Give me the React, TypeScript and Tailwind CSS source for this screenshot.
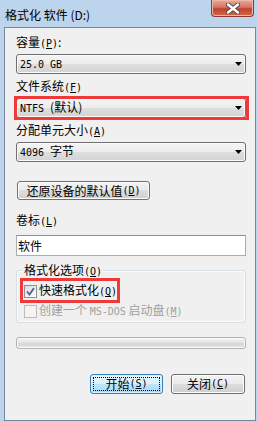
import type { ReactNode } from "react";

const cjk = "font-['Noto_Sans_CJK_SC','Noto_Sans',sans-serif]";
const mono = "font-['DejaVu_Sans_Mono','Liberation_Mono','Noto_Sans_CJK_SC',monospace] text-[10px]";

function Key({ k }: { k: string }) {
  return (
    <span className={mono}>
      (<span className="underline underline-offset-1">{k}</span>)
    </span>
  );
}

function M({ children }: { children: ReactNode }) {
  return <span className={mono}>{children}</span>;
}

function Label({ children, className = "" }: { children: ReactNode; className?: string }) {
  return <div className={`h-[14px] whitespace-nowrap leading-[14px] ${className}`}>{children}</div>;
}

function Arrow() {
  return (
    <svg width="7" height="4" viewBox="0 0 7 4" className="ml-auto mr-[3px]">
      <polygon points="0,0 7,0 3.5,4" fill="#000" />
    </svg>
  );
}

function Combo({ children, marked = false }: { children: ReactNode; marked?: boolean }) {
  return (
    <div className="relative flex h-[20px] items-center rounded-[3px] border border-[#707070] bg-[linear-gradient(to_bottom,#f4f4f4,#ececec_50%,#dfdfdf_50%,#d3d3d3)] pl-[3px] leading-[14px] shadow-[inset_0_0_0_1px_#fafafa]">
      <span className="whitespace-nowrap">{children}</span>
      <Arrow />
      {marked && (
        <div className="pointer-events-none absolute -bottom-[3px] -left-[3px] -right-[4px] -top-[3px] border-[3px] border-[#f03a3a]" />
      )}
    </div>
  );
}

function Button({ children, className = "", primary = false }: { children: ReactNode; className?: string; primary?: boolean }) {
  if (primary) {
    return (
      <div className={`flex items-center justify-center rounded-[3px] border border-[#3c7fb1] bg-[linear-gradient(to_bottom,#eaf6fd,#d9f0fc_50%,#bee6fd_50%,#a7d9f5)] p-[2px] shadow-[inset_0_0_0_1px_#d8f0fc] ${className}`}>
        <div className="flex h-full w-full items-center justify-center border border-dotted border-[#000] leading-[14px]">
          {children}
        </div>
      </div>
    );
  }
  return (
    <div className={`flex items-center justify-center rounded-[3px] border border-[#707070] bg-[linear-gradient(to_bottom,#f2f2f2,#ebebeb_50%,#dddddd_50%,#cfcfcf)] leading-[14px] shadow-[inset_0_0_0_1px_#fcfcfc] ${className}`}>
      {children}
    </div>
  );
}

function Check({ checked, disabled }: { checked?: boolean; disabled?: boolean }) {
  return (
    <div
      className={`flex h-[13px] w-[13px] shrink-0 items-center justify-center border ${
        disabled ? "border-[#bcbcbc] bg-[#f4f4f4]" : "border-[#8e8f8f] bg-[linear-gradient(135deg,#dcdcdc,#ffffff)]"
      }`}
    >
      {checked && (
        <svg width="9" height="9" viewBox="0 0 9 9">
          <path d="M1 4.5 L3.5 7.5 L8 1" fill="none" stroke="#4a5f97" strokeWidth="1.8" />
        </svg>
      )}
    </div>
  );
}

export default function App() {
  return (
    <div className={`relative h-[422px] w-[257px] overflow-hidden bg-[#bcd4ec] text-[12px] text-black ${cjk}`}>
      {/* title bar */}
      <div className="flex h-[27px] items-center pl-[5px] pt-[2px] leading-[14px]">
        格式化 软件 (D:)
      </div>
      <div className="absolute left-[211px] top-0 flex h-[17px] w-[43px] items-center justify-center rounded-b-[4px] border border-t-0 border-[#8c3a31] bg-[linear-gradient(to_bottom,#e9a99c,#d47563_45%,#c2402f_55%,#d06a4a)] shadow-[inset_0_0_0_1px_#f0b6a8]">
        <svg width="14" height="11" viewBox="0 0 14 11">
          <path d="M2 1.5 L12 9.5 M12 1.5 L2 9.5" stroke="#4a4a4a" strokeWidth="4.2" strokeLinecap="round" />
          <path d="M2 1.5 L12 9.5 M12 1.5 L2 9.5" stroke="#fff" strokeWidth="2.4" strokeLinecap="round" />
        </svg>
      </div>

      {/* client area */}
      <div className="ml-[4px] mr-[1px] flex h-[394px] flex-col border border-[#76879d] bg-[#f0f0f0] pl-[11px] pr-[9px] pt-[7px]">
        <Label>
          容量<Key k="P" />:
        </Label>
        <div className="mt-[5px]">
          <Combo>
            <M>25.0 GB</M>
          </Combo>
        </div>
        <Label className="mt-[5px]">
          文件系统<Key k="F" />
        </Label>
        <div className="mt-[5px]">
          <Combo marked>
            <M>NTFS </M>(默认)
          </Combo>
        </div>
        <Label className="mt-[5px]">
          分配单元大小<Key k="A" />
        </Label>
        <div className="mt-[5px]">
          <Combo>
            <M>4096 </M>字节
          </Combo>
        </div>

        <Button className="ml-[1px] mt-[19px] h-[19px] w-[133px]">
          还原设备的默认值<Key k="D" />
        </Button>

        <Label className="mt-[13px]">
          卷标<Key k="L" />
        </Label>
        <div className="mt-[8px] flex h-[21px] items-center border border-[#abadb3] border-t-[#8e8f8f] bg-white pl-[1px] leading-[14px]">
          软件
        </div>

        {/* options group */}
        <div className="relative mt-[14px] h-[53px] rounded-[3px] border border-[#d5dfe5] pl-[7px] pt-[13px] shadow-[inset_0_0_0_1px_#fbfbfb]">
          <div className="absolute -top-[8px] left-[6px] bg-[#f0f0f0] px-[1px] leading-[14px]">
            格式化选项<Key k="O" />
          </div>
          <div className="relative flex h-[14px] items-center gap-[2px] leading-[14px]">
            <Check checked />
            <span>
              快速格式化<Key k="Q" />
            </span>
            <div className="pointer-events-none absolute -left-[4px] -top-[6px] h-[25px] w-[100px] border-[3px] border-[#f03a3a]" />
          </div>
          <div className="mt-[6px] flex h-[14px] items-center gap-[2px] leading-[14px] text-[#a0a0a0]">
            <Check disabled />
            <span className="whitespace-nowrap">
              创建一个 <M>MS-DOS</M> 启动盘<Key k="M" />
            </span>
          </div>
        </div>

        <div className="mt-[14px] h-[12px] rounded-[3px] border border-[#b2b2b2] bg-[linear-gradient(to_bottom,#f6f6f6,#e6e6e6_40%,#d6d6d6_60%,#e8e8e8)] shadow-[inset_0_0_0_1px_#fafafa]" />

        <div className="mt-[25px] flex justify-end gap-[8px] pr-[1px]">
          <Button primary className="h-[20px] w-[73px]">
            开始<Key k="S" />
          </Button>
          <Button className="h-[20px] w-[74px]">
            关闭<Key k="C" />
          </Button>
        </div>
      </div>
    </div>
  );
}
